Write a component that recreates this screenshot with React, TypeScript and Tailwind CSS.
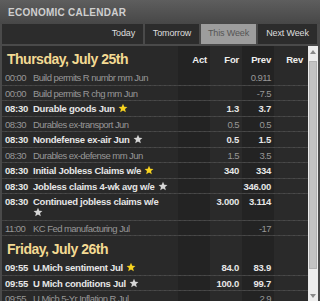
import React from 'react';

type Tone = 'gold' | 'white';

interface CalRow {
    time: string;
    event: string;
    star?: Tone;
    wrapStar?: boolean;
    fore?: string;
    prev?: string;
    bold?: boolean;
}

interface Day {
    title: string;
    rows: CalRow[];
}

const days: Day[] = [
    {
        title: 'Thursday, July 25th',
        rows: [
            { time: '00:00', event: 'Build permits R numbr mm Jun', prev: '0.911' },
            { time: '00:00', event: 'Build permits R chg mm Jun', prev: '-7.5' },
            { time: '08:30', event: 'Durable goods Jun', star: 'gold', fore: '1.3', prev: '3.7', bold: true },
            { time: '08:30', event: 'Durables ex-transport Jun', fore: '0.5', prev: '0.5' },
            { time: '08:30', event: 'Nondefense ex-air Jun', star: 'white', fore: '0.5', prev: '1.5', bold: true },
            { time: '08:30', event: 'Durables ex-defense mm Jun', fore: '1.5', prev: '3.5' },
            { time: '08:30', event: 'Initial Jobless Claims w/e', star: 'gold', fore: '340', prev: '334', bold: true },
            { time: '08:30', event: 'Jobless claims 4-wk avg w/e', star: 'white', prev: '346.00', bold: true },
            { time: '08:30', event: 'Continued jobless claims w/e', star: 'white', wrapStar: true, fore: '3.000', prev: '3.114', bold: true },
            { time: '11:00', event: 'KC Fed manufacturing Jul', prev: '-17' },
        ],
    },
    {
        title: 'Friday, July 26th',
        rows: [
            { time: '09:55', event: 'U.Mich sentiment Jul', star: 'gold', fore: '84.0', prev: '83.9', bold: true },
            { time: '09:55', event: 'U Mich conditions Jul', star: 'white', fore: '100.0', prev: '99.7', bold: true },
            { time: '09:55', event: 'U.Mich 5-Yr Inflation R Jul', prev: '2.9' },
        ],
    },
];

function Star({ tone }: { tone: Tone }) {
    return (
        <svg
            viewBox="0 0 24 24"
            className={`inline-block w-[10px] h-[10px] align-[-1px] ${tone === 'gold' ? 'fill-[#f7d31f]' : 'fill-[#d6d6d6]'}`}
        >
            <path d="M12 1.5l3.1 7.2 7.6.7-5.8 5 1.8 7.6L12 18l-6.7 4 1.8-7.6-5.8-5 7.6-.7z" />
        </svg>
    );
}

function EventRow({ row }: { row: CalRow }) {
    const tone = row.bold
        ? 'text-[#e6e6e6] font-bold tracking-[-0.25px]'
        : 'text-[#979797] tracking-[-0.55px]';
    return (
        <div className={`flex border-b border-dashed border-[#414141] leading-[11px] ${tone}`}>
            <div className="w-[29px] pl-[3px] pt-[2px] pb-[1.5px] bg-[#292929]">{row.time}</div>
            <div className="w-[147px] pl-[2px] pt-[2px] pb-[1.5px] bg-[#292929]">
                {row.event}
                {row.star && !row.wrapStar && (
                    <span className="ml-[3px]">
                        <Star tone={row.star} />
                    </span>
                )}
                {row.star && row.wrapStar && (
                    <div>
                        <Star tone={row.star} />
                    </div>
                )}
            </div>
            <div className="w-[32px] pr-[3px] pt-[2px] text-right bg-[#232323]" />
            <div className="w-[32px] pr-[3px] pt-[2px] text-right bg-[#2a2a2a]">{row.fore}</div>
            <div className="w-[32px] pr-[3px] pt-[2px] text-right bg-[#232323]">{row.prev}</div>
            <div className="w-[34px] pr-[5px] pt-[2px] text-right bg-[#2a2a2a]" />
        </div>
    );
}

function DayHeader({ title, first }: { title: string; first: boolean }) {
    return (
        <div className="flex h-[24px]">
            <div className="w-[176px] flex items-end pl-[5px] pb-[4px] bg-[#292929]">
                <span className="text-[14px] leading-[14px] font-bold tracking-[-0.5px] text-[#f3da93]">{title}</span>
            </div>
            {['Act', 'For', 'Prev', 'Rev'].map((label, i) => (
                <div
                    key={label}
                    className={`flex items-end justify-end pb-[4px] ${i % 2 === 0 ? 'bg-[#232323]' : 'bg-[#2a2a2a]'} ${i === 3 ? 'w-[34px] pr-[5px]' : 'w-[32px] pr-[3px]'}`}
                >
                    {first && (
                        <span className="text-[9.5px] leading-[12px] font-bold tracking-[-0.2px] text-[#efefef]">{label}</span>
                    )}
                </div>
            ))}
        </div>
    );
}

function ScrollBar() {
    return (
        <div className="w-[10px] h-[255px] flex flex-col bg-[#ededed]">
            <div className="h-[11px] flex items-center justify-center">
                <div className="w-0 h-0 border-l-[3px] border-r-[3px] border-b-[4px] border-l-transparent border-r-transparent border-b-[#8a8a8a]" />
            </div>
            <div className="mt-[4px] h-[208px] mx-[1px] bg-[#c3c3c3] border border-[#b2b2b2]" />
            <div className="flex-1" />
            <div className="h-[11px] flex items-center justify-center">
                <div className="w-0 h-0 border-l-[3px] border-r-[3px] border-t-[4px] border-l-transparent border-r-transparent border-t-[#8a8a8a]" />
            </div>
        </div>
    );
}

export default function App() {
    return (
        <div className="w-[320px] h-[301px] overflow-hidden bg-[#4a4a4a] font-['Liberation_Sans',Arial,sans-serif]">
            {/* Title bar */}
            <div className="h-[24px] flex items-center pl-[8px] bg-gradient-to-b from-[#5e5e5e] to-[#474747]">
                <h2 className="text-[10px] font-bold tracking-[0.25px] text-[#cfcfcf]">ECONOMIC CALENDAR</h2>
            </div>

            {/* Tabs */}
            <div className="h-[20px] flex gap-[2px] pl-[2px] pr-[3px] bg-[#4a4a4a] text-[9px] tracking-[-0.15px]">
                <div className="flex-1 flex items-center justify-end pr-[8px] bg-[#2c2c2c] text-[#dedede]">Today</div>
                <div className="w-[54px] flex items-center justify-center bg-[#2c2c2c] text-[#dedede]">Tomorrow</div>
                <div className="w-[55px] flex items-center justify-center bg-[#9d9d9d] text-[#555555]">This Week</div>
                <div className="w-[59px] flex items-center justify-center bg-[#2c2c2c] text-[#dedede]">Next Week</div>
            </div>

            {/* Body */}
            <div className="mt-[2px] flex pl-[2px]">
                <div className="w-[306px] h-[255px] overflow-hidden text-[9.5px]">
                    {days.map((day, i) => (
                        <div key={day.title}>
                            <DayHeader title={day.title} first={i === 0} />
                            {day.rows.map((row, j) => (
                                <EventRow key={j} row={row} />
                            ))}
                        </div>
                    ))}
                </div>
                <ScrollBar />
            </div>
        </div>
    );
}
